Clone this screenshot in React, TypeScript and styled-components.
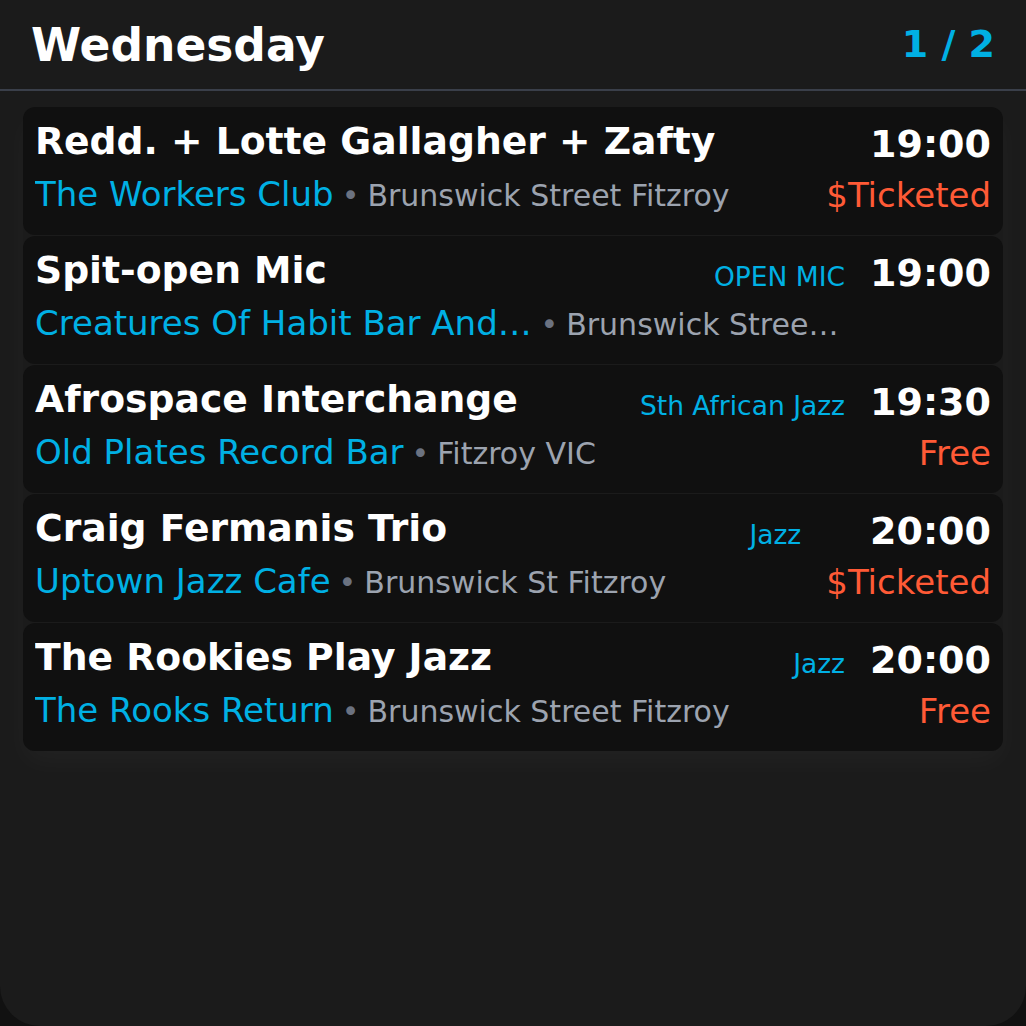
import React from 'react';
import styled, { createGlobalStyle } from 'styled-components';

interface Gig {
  title: string;
  tag?: string;
  time: string;
  venue: string;
  address: string;
  price?: string;
}

const gigs: Gig[] = [
  {
    title: 'Redd. + Lotte Gallagher + Zafty',
    time: '19:00',
    venue: 'The Workers Club',
    address: 'Brunswick Street Fitzroy',
    price: '$Ticketed',
  },
  {
    title: 'Spit-open Mic',
    tag: 'OPEN MIC',
    time: '19:00',
    venue: 'Creatures Of Habit Bar And Kitchen',
    address: 'Brunswick Street Fitzroy',
  },
  {
    title: 'Afrospace Interchange',
    tag: 'Sth African Jazz',
    time: '19:30',
    venue: 'Old Plates Record Bar',
    address: 'Fitzroy VIC',
    price: 'Free',
  },
  {
    title: 'Craig Fermanis Trio',
    tag: 'Jazz',
    time: '20:00',
    venue: 'Uptown Jazz Cafe',
    address: 'Brunswick St Fitzroy',
    price: '$Ticketed',
  },
  {
    title: 'The Rookies Play Jazz',
    tag: 'Jazz',
    time: '20:00',
    venue: 'The Rooks Return',
    address: 'Brunswick Street Fitzroy',
    price: 'Free',
  },
];

const GlobalStyle = createGlobalStyle`
  html, body {
    margin: 0;
    padding: 0;
    background: #111111;
  }
  body {
    font-family: 'DejaVu Sans', 'Liberation Sans', sans-serif;
  }
  * {
    box-sizing: border-box;
  }
`;

const GigCard = ({ title, tag, time, venue, address, price }: Gig): JSX.Element => {
  return (
    <Card>
      <Main>
        <TopRow>
          <Title>{title}</Title>
          {tag && <Tag>{tag}</Tag>}
        </TopRow>
        <VenueLine>
          <Venue>{venue}</Venue>
          <Dot>•</Dot>
          <Address>{address}</Address>
        </VenueLine>
      </Main>
      <Side>
        <Time>{time}</Time>
        {price && <Price>{price}</Price>}
      </Side>
    </Card>
  );
};

const App = (): JSX.Element => {
  return (
    <>
      <GlobalStyle />
      <Screen>
        <Header>
          <Day>Wednesday</Day>
          <Pager>1 / 2</Pager>
        </Header>
        <List>
          {gigs.map((gig) => (
            <GigCard key={gig.title} {...gig} />
          ))}
        </List>
      </Screen>
    </>
  );
};

const Screen = styled.div`
  width: 1026px;
  height: 1026px;
  background: #1b1b1b;
  border-radius: 0 0 40px 40px;
  overflow: hidden;
  display: flex;
  flex-direction: column;
`;

const Header = styled.header`
  display: flex;
  align-items: center;
  justify-content: space-between;
  height: 91px;
  padding: 0 31px 0 31px;
  border-bottom: 2px solid #3a3f4a;
`;

const Day = styled.h1`
  margin: 0;
  padding-top: 2px;
  font-size: 45.5px;
  font-weight: 700;
  color: #ffffff;
`;

const Pager = styled.span`
  font-size: 38px;
  font-weight: 700;
  color: #00b0e4;
  padding-bottom: 2px;
`;

const List = styled.div`
  display: flex;
  flex-direction: column;
  gap: 1px;
  margin: 16px 23px 0;
  border-radius: 12px;
  box-shadow: 0 12px 28px rgba(255, 255, 255, 0.03);
`;

const Card = styled.div`
  display: flex;
  gap: 25px;
  height: 128px;
  padding: 12px 12px 0;
  background: #101010;
  border-radius: 12px;
`;

const Main = styled.div`
  flex: 1;
  min-width: 0;
  display: flex;
  flex-direction: column;
  gap: 11px;
`;

const TopRow = styled.div`
  display: flex;
  align-items: flex-end;
  gap: 16px;
`;

const Title = styled.div`
  flex: 1;
  min-width: 0;
  font-size: 37.7px;
  font-weight: 700;
  color: #ffffff;
  white-space: nowrap;
  overflow: hidden;
  text-overflow: ellipsis;
`;

const Tag = styled.span`
  flex-shrink: 0;
  font-size: 26.5px;
  color: #00b0e4;
`;

const VenueLine = styled.div`
  display: flex;
  align-items: baseline;
  white-space: nowrap;
  min-width: 0;
`;

const Venue = styled.span`
  flex: 0 0.75 auto;
  min-width: 0;
  overflow: hidden;
  text-overflow: ellipsis;
  font-size: 34px;
  color: #00b0e4;
`;

const Dot = styled.span`
  flex-shrink: 0;
  padding: 0 8px;
  font-size: 30px;
  color: #6b7280;
`;

const Address = styled.span`
  flex: 0 1 auto;
  min-width: 0;
  overflow: hidden;
  text-overflow: ellipsis;
  font-size: 30px;
  color: #9ca3af;
`;

const Side = styled.div`
  flex-shrink: 0;
  display: flex;
  flex-direction: column;
  align-items: flex-end;
  gap: 9px;
  padding-top: 3px;
`;

const Time = styled.div`
  font-size: 38px;
  font-weight: 700;
  color: #ffffff;
`;

const Price = styled.div`
  font-size: 34px;
  color: #ff5a36;
`;

export default App;
